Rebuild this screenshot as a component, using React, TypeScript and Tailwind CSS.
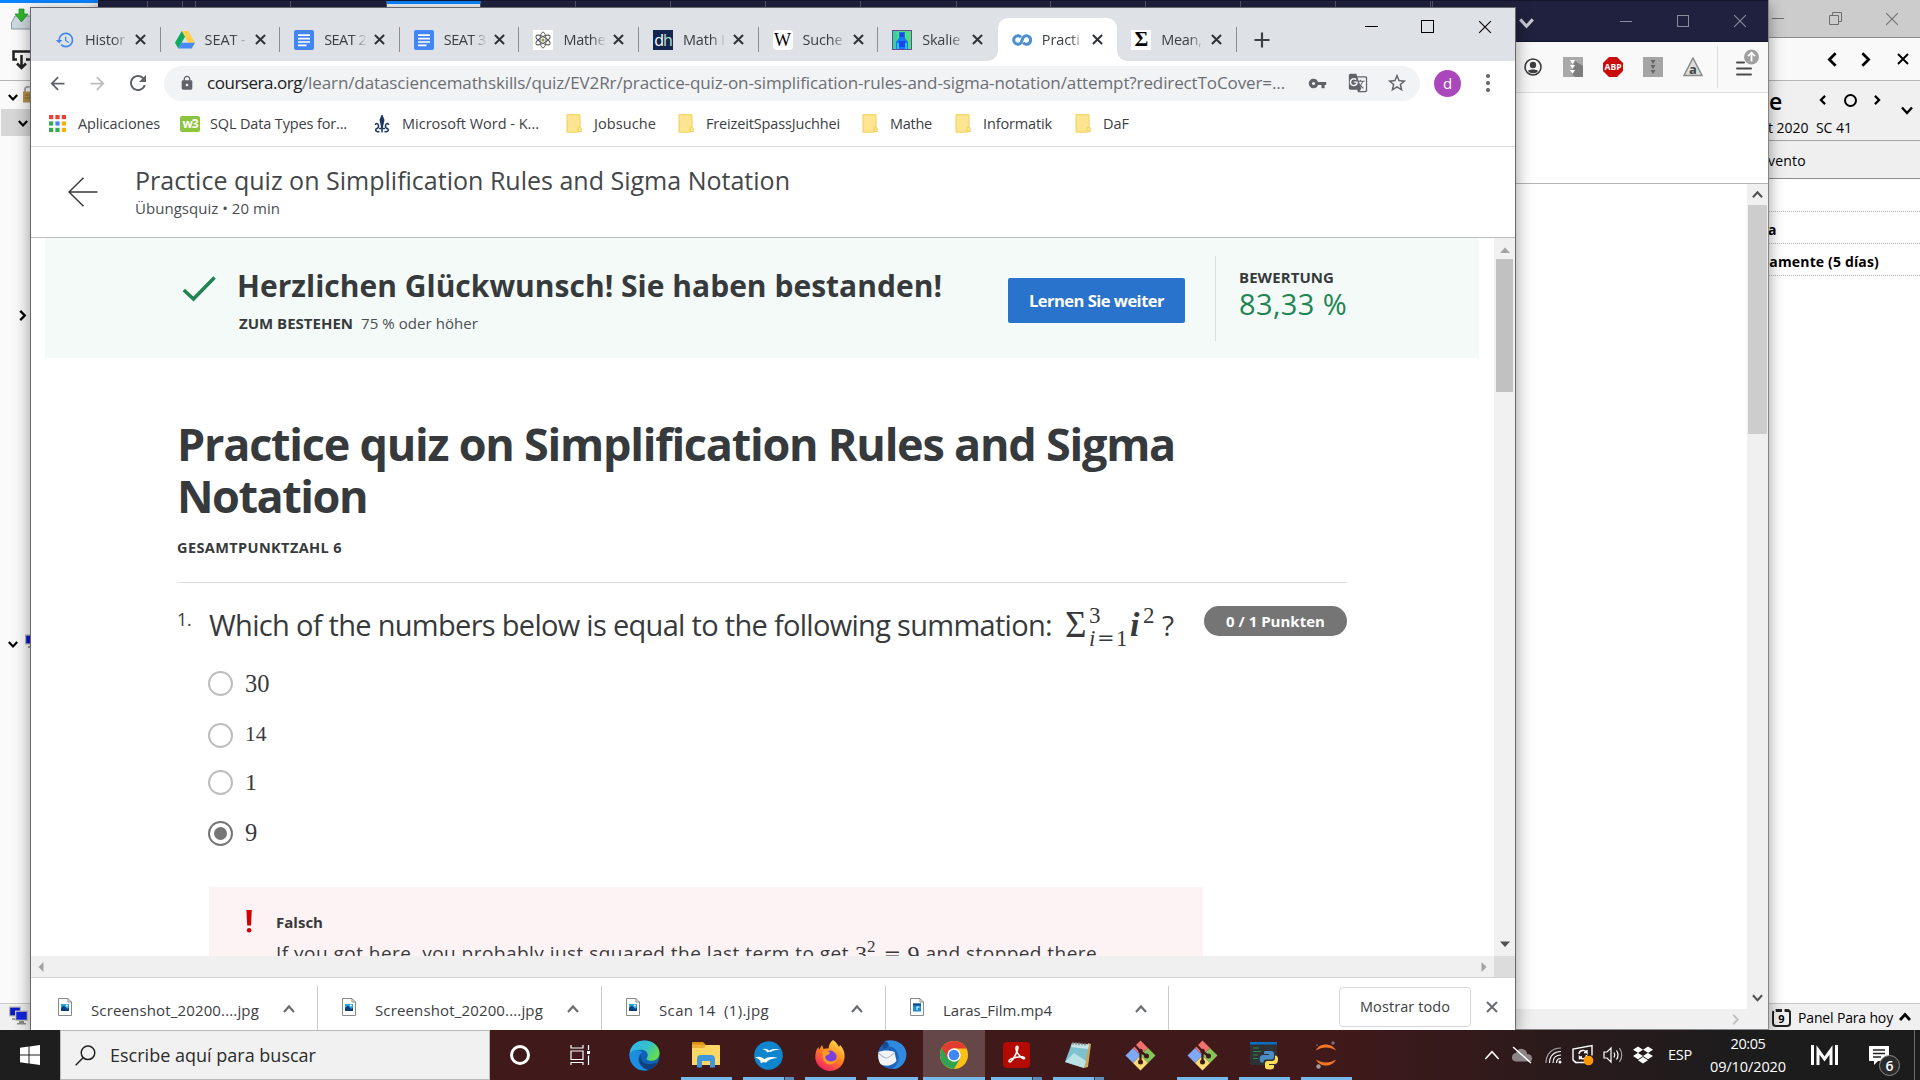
import React, { useLayoutEffect, useRef, useState } from "react";
import { MdHistory, MdLock, MdVpnKey, MdGTranslate, MdStarBorder, MdRefresh, MdArrowBack, MdArrowForward } from "react-icons/md";
import { FaDropbox } from "react-icons/fa";

/* Spreads a single line of text evenly over a given width. */
function Fit({ w, className = "", children }: { w: number; className?: string; children: string }) {
  const ref = useRef<HTMLSpanElement>(null);
  const [spacing, setSpacing] = useState(0);
  useLayoutEffect(() => {
    const el = ref.current;
    if (!el) return;
    el.style.letterSpacing = "0px";
    const natural = el.getBoundingClientRect().width;
    const next = (w - natural) / children.length;
    el.style.letterSpacing = next + "px";
    setSpacing(next);
  }, [w, children]);
  return (
    <span ref={ref} className={"inline-block shrink-0 whitespace-pre " + className} style={{ letterSpacing: spacing }}>
      {children}
    </span>
  );
}

function Chevron({ dir, size = 12, stroke = 2, className = "" }: { dir: "up" | "down" | "left" | "right"; size?: number; stroke?: number; className?: string }) {
  const d = { up: "M1 9 6 3.5 11 9", down: "M1 3.5 6 9 11 3.5", left: "M8.5 1 3.5 6 8.5 11", right: "M3.5 1 8.5 6 3.5 11" }[dir];
  return (
    <svg width={size} height={size} viewBox="0 0 12 12" className={"shrink-0 " + className} fill="none" stroke="currentColor" strokeWidth={stroke}>
      <path d={d} />
    </svg>
  );
}

function Cross({ size = 11, stroke = 2, className = "" }: { size?: number; stroke?: number; className?: string }) {
  return (
    <svg width={size} height={size} viewBox="0 0 12 12" className={"shrink-0 " + className} fill="none" stroke="currentColor" strokeWidth={stroke}>
      <path d="M1 1 11 11M11 1 1 11" />
    </svg>
  );
}

/* ---------- Favicons ---------- */

const DriveIcon = () => (
  <svg width="20" height="18" viewBox="0 0 20 18">
    <path d="M6.7 0h6.6L20 11.7h-6.6z" fill="#ffcf48" />
    <path d="M6.7 0 0 11.7 3.3 17.5 10 5.8z" fill="#11a861" />
    <path d="M6.6 11.7H20l-3.3 5.8H3.3z" fill="#4688f4" />
  </svg>
);
const DocsIcon = () => (
  <svg width="20" height="20" viewBox="0 0 20 20">
    <rect width="20" height="20" rx="2" fill="#4285f4" />
    <path d="M4 5.2h12M4 8.6h12M4 12h12M4 15.3h8.5" stroke="#fff" strokeWidth="1.7" />
  </svg>
);
const AtomIcon = () => (
  <svg width="20" height="20" viewBox="0 0 20 20" fill="none" stroke="#555" strokeWidth="0.9">
    <rect width="20" height="20" fill="#fff" stroke="none" />
    <ellipse cx="10" cy="10" rx="3" ry="8" />
    <ellipse cx="10" cy="10" rx="3" ry="8" transform="rotate(60 10 10)" />
    <ellipse cx="10" cy="10" rx="3" ry="8" transform="rotate(120 10 10)" />
    <circle cx="10" cy="10" r="1.6" fill="#8a9a3b" stroke="none" />
  </svg>
);
const DhIcon = () => (
  <span className="flex h-5 w-5 items-center justify-center bg-[#14264f] font-['Open_Sans',sans-serif] text-[16px] leading-none tracking-[-1px]">
    <span className="text-white">d</span>
    <span className="text-[#b9e6d2]">h</span>
  </span>
);
const WikiIcon = () => (
  <span className="flex h-5 w-5 items-center justify-center rounded-[4px] bg-white font-['Liberation_Serif',serif] text-[18px] leading-none text-black">W</span>
);
const HeatIcon = () => (
  <svg width="20" height="20" viewBox="0 0 20 20">
    <rect width="20" height="20" fill="#4fe07a" />
    <path d="M0 0h5v20H0z" fill="#3ccf9a" />
    <path d="M7 2h6v6l3 4v8H4v-8l3-4z" fill="#1676f5" />
    <path d="M8 3h4v4H8zM7 11h6v6H7z" fill="#1b45e6" />
    <path d="M5 13h2v7H5zM13 13h2v7h-2z" fill="#20c9ef" />
    <rect x=".5" y=".5" width="19" height="19" fill="none" stroke="#6a4aa0" />
  </svg>
);
const CourseraIcon = () => (
  <svg width="20" height="12" viewBox="0 0 20 12" fill="none" stroke="#4a8fcf" strokeWidth="3">
    <path d="M9 3.2A4.2 4.2 0 1 0 9 8.8L11.2 3.4A4.2 4.2 0 1 1 11.2 8.6" strokeLinejoin="round" />
  </svg>
);
const SigmaIcon = () => (
  <span className="flex h-5 w-5 items-center justify-center bg-white font-['Liberation_Serif',serif] text-[21px] font-bold leading-none text-black">Σ</span>
);

const TABS: { icon: React.ReactNode; title: string; w: number; active?: boolean; bar?: boolean }[] = [
  { icon: <MdHistory size={20} color="#4285f4" />, title: "Histor", w: 40, bar: true },
  { icon: <DriveIcon />, title: "SEAT -", w: 41, bar: true },
  { icon: <DocsIcon />, title: "SEAT 2", w: 42, bar: true },
  { icon: <DocsIcon />, title: "SEAT 3", w: 42, bar: true },
  { icon: <AtomIcon />, title: "Mathe", w: 42, bar: true },
  { icon: <DhIcon />, title: "Math I", w: 42, bar: true },
  { icon: <WikiIcon />, title: "Suche", w: 40, bar: true },
  { icon: <HeatIcon />, title: "Skalie", w: 38 },
  { icon: <CourseraIcon />, title: "Practi", w: 38, active: true },
  { icon: <SigmaIcon />, title: "Mean,", w: 40, bar: true },
];

function TabStrip() {
  return (
    <div className="flex h-[53px] bg-[#dee1e6] pl-[10px]">
      {TABS.map((t, i) => (
        <div key={i} className={"relative mt-[10px] flex h-[43px] w-[119.6px] shrink-0 items-center " + (t.active ? "rounded-t-[10px] bg-white" : "")}>
          {t.active && (
            <>
              <span className="absolute bottom-0 -left-[10px] h-[10px] w-[10px] bg-[radial-gradient(circle_at_0_0,transparent_9.5px,white_10px)]" />
              <span className="absolute bottom-0 -right-[10px] h-[10px] w-[10px] bg-[radial-gradient(circle_at_100%_0,transparent_9.5px,white_10px)]" />
            </>
          )}
          <span className="ml-[14px] flex w-5 items-center justify-center">{t.icon}</span>
          <span className="ml-[10px] w-[43px] overflow-hidden text-[14.5px] leading-5 text-[#3c4043] [mask-image:linear-gradient(to_right,black_65%,rgba(0,0,0,0.15)_95%)]">
            <Fit w={t.w}>{t.title}</Fit>
          </span>
          <Cross size={11} stroke={2.2} className="ml-[7px] text-[#303337]" />
          {t.bar && <span className="ml-auto h-[25px] w-px bg-[#8a8d91]" />}
        </div>
      ))}
      <span className="mt-[10px] ml-[17.5px] flex h-[43px] items-center text-[#3c4043]">
        <svg width="16" height="16" viewBox="0 0 16 16" stroke="currentColor" strokeWidth="2.2">
          <path d="M8 0.5v15M0.5 8h15" />
        </svg>
      </span>
      <div className="ml-[95px] flex h-[37px] items-center text-black">
        <span className="h-px w-[13px] bg-black" />
        <span className="ml-[43px] h-[13px] w-[13px] border border-black" />
        <Cross size={14} stroke={0.95} className="ml-[44px]" />
      </div>
    </div>
  );
}

function Toolbar() {
  return (
    <div className="flex h-[44px] items-center bg-white text-[#5f6368]">
      <MdArrowBack size={21} className="ml-[16px]" />
      <MdArrowForward size={21} className="ml-[19px] text-[#babcbe]" />
      <MdRefresh size={24} className="ml-[18px]" />
      <div className="ml-[14px] flex h-[35px] w-[1256px] items-center rounded-full bg-[#f1f3f4]">
        <MdLock size={16} className="ml-[15px]" />
        <span className="ml-[12px] flex text-[17px] leading-6">
          <Fit w={95} className="text-[#202124]">coursera.org</Fit>
          <Fit w={983} className="text-[#6b6f74]">/learn/datasciencemathskills/quiz/EV2Rr/practice-quiz-on-simplification-rules-and-sigma-notation/attempt?redirectToCover=...</Fit>
        </span>
        <MdVpnKey size={19} className="ml-[23px]" />
        <MdGTranslate size={20} className="ml-[21px]" />
        <MdStarBorder size={22} className="ml-[18px]" />
      </div>
      <span className="ml-[14px] flex h-[27px] w-[27px] items-center justify-center rounded-full bg-[#ab47bc] text-[15px] leading-none text-white">d</span>
      <span className="ml-[25px] flex flex-col gap-[3px]">
        <span className="h-1 w-1 rounded-full bg-[#5f6368]" />
        <span className="h-1 w-1 rounded-full bg-[#5f6368]" />
        <span className="h-1 w-1 rounded-full bg-[#5f6368]" />
      </span>
    </div>
  );
}

const Folder = () => (
  <svg width="16" height="19" viewBox="0 0 16 19">
    <path d="M1 .7h13v12.5l1.2.8v3.5H12V18.2H1z" fill="#ffe591" stroke="#f3cf55" strokeWidth="1" />
    <path d="M12 17.5v-4.3h2" fill="none" stroke="#f3cf55" />
  </svg>
);

const APP_DOTS = ["#ea4335", "#ea4335", "#ea4335", "#34a853", "#4285f4", "#fbaf05", "#34a853", "#34a853", "#fbaf05"];

const FOLDERS: [string, string, number][] = [
  ["ml-[27px]", "Jobsuche", 62],
  ["ml-[22px]", "FreizeitSpassJuchhei", 134],
  ["ml-[22px]", "Mathe", 42],
  ["ml-[23px]", "Informatik", 69],
  ["ml-[23px]", "DaF", 26],
];

function Bookmarks() {
  return (
    <div className="flex h-[42px] items-center border-b border-[#d8dadd] bg-white pb-[4px] text-[14.5px] leading-5 text-[#3c4043]">
      <svg width="17" height="17" viewBox="0 0 17 17" className="ml-[18px]">
        {APP_DOTS.map((c, i) => (
          <rect key={i} x={(i % 3) * 6.4} y={Math.floor(i / 3) * 6.4} width="4.2" height="4.2" fill={c} />
        ))}
      </svg>
      <Fit w={82} className="ml-[12px]">Aplicaciones</Fit>
      <span className="ml-[20px] flex h-4 w-5 items-center justify-center rounded-[2px] bg-[#8cc43d] text-[12px] font-bold leading-none tracking-[-1px] text-white">w3</span>
      <Fit w={137} className="ml-[10px]">SQL Data Types for...</Fit>
      <svg width="16" height="18" viewBox="0 0 16 18" className="ml-[27px]" fill="none" stroke="#1f3864" strokeWidth="1.5">
        <path d="M8 .5 6.300 5 8 13l1.700-8z" fill="#1f3864" />
        <path d="M8 12v5.500M5.500 16.500c-3 .8-4.500-1-3.500-2.500 1.500-.5 3-1 2.500-3.500C4 8 1.500 8 1.500 10M10.500 16.500c3 .8 4.500-1 3.500-2.500-1.500-.5-3-1-2.500-3.500.5-2.500 3-2.500 3-.5M5 13.500h6" />
      </svg>
      <Fit w={137} className="ml-[12px]">Microsoft Word - K...</Fit>
      {FOLDERS.map(([m, name, w]) => (
        <span key={name} className={"flex items-center " + m}>
          <Folder />
          <Fit w={w} className="ml-[12px]">{name}</Fit>
        </span>
      ))}
    </div>
  );
}

function PageHeader() {
  return (
    <div className="flex h-[91px] border-b border-[#b9bbbc] bg-white text-[#373a3c]">
      <svg width="30" height="30" viewBox="0 0 30 30" className="mt-[30px] ml-[37px]" fill="none" stroke="#373a3c" strokeWidth="1.5">
        <path d="M29.500 15H1M15.500 .8 1 15 15.500 29.200" />
      </svg>
      <div className="mt-[15px] ml-[37px]">
        <div className="h-[36px] text-[25px] leading-[36px]">
          <Fit w={655} className="text-[#43474a]">Practice quiz on Simplification Rules and Sigma Notation</Fit>
        </div>
        <div className="h-[20px] text-[15px] leading-[20px]">
          <Fit w={145} className="text-[#4b4e51]">Übungsquiz • 20 min</Fit>
        </div>
      </div>
    </div>
  );
}

function Banner() {
  return (
    <div className="ml-[14px] flex h-[120px] w-[1434px] bg-[#f4faf8] text-[#373a3c]">
      <svg width="34" height="26" viewBox="0 0 34 26" className="mt-[38px] ml-[137px]" fill="none" stroke="#208552" strokeWidth="3.6">
        <path d="M1.800 14 11.500 23 32.500 1.500" />
      </svg>
      <div className="ml-[21px] w-[771px]">
        <div className="mt-[27px] h-[42px] text-[30px] font-bold leading-[42px]">
          <Fit w={705}>Herzlichen Glückwunsch! Sie haben bestanden!</Fit>
        </div>
        <div className="mt-[6px] ml-[2px] flex h-5 text-[15px] leading-5">
          <Fit w={114} className="font-bold">ZUM BESTEHEN</Fit>
          <Fit w={117} className="ml-[8px] text-[#4b4e51]">75 % oder höher</Fit>
        </div>
      </div>
      <div className="mt-[40px] flex h-[45px] w-[177px] items-center justify-center rounded-[2px] bg-[#2a73cc] pt-[1px] text-[16.500px] font-bold text-white">
        <Fit w={135}>Lernen Sie weiter</Fit>
      </div>
      <div className="mt-[18px] ml-[30px] h-[85px] w-px bg-[#d9dfde]" />
      <div className="ml-[23px] pt-[29px]">
        <div className="h-[20px] text-[15px] font-bold leading-[21px]">
          <Fit w={95}>BEWERTUNG</Fit>
        </div>
        <div className="h-[34px] text-[29px] leading-[34px] text-[#208552]">
          <Fit w={108}>83,33 %</Fit>
        </div>
      </div>
    </div>
  );
}

function SumFormula() {
  return (
    <span className="flex h-[46px] items-center font-['Liberation_Serif',serif] text-[#373a3c]">
      <span className="w-[24px] text-[37px] leading-[46px]">Σ</span>
      <span className="flex w-[41px] flex-col pt-[3px] text-[23px] leading-[23px]">
        <span>3</span>
        <span className="flex">
          <i className="w-[8px]">i</i>
          <span className="w-[19px] font-['DejaVu_Serif',serif] text-[21px]">=</span>
          <span>1</span>
        </span>
      </span>
      <b className="w-[13px] text-[34px] font-bold italic leading-[46px]">i</b>
      <span className="h-[38px] w-[19px] pt-[1px] text-[23px] leading-[18px]">2</span>
      <span className="font-['Open_Sans',sans-serif] text-[28px] leading-[46px]">?</span>
    </span>
  );
}

const ANSWERS: { label: string; row: string; text: string; on?: boolean }[] = [
  { label: "30", row: "h-[70px]", text: "text-[24.500px] pt-[2px]" },
  { label: "14", row: "h-[34px]", text: "text-[21.500px] pb-[2px]" },
  { label: "1", row: "h-[60px]", text: "text-[24px]" },
  { label: "9", row: "h-[42px]", text: "text-[24.500px]", on: true },
];

function Quiz() {
  return (
    <div className="ml-[146px] w-[1170px] text-[#373a3c]">
      <h1 className="mt-[60px] flex flex-col items-start text-[45px] font-bold leading-[52px]">
        <Fit w={998}>Practice quiz on Simplification Rules and Sigma</Fit>
        <Fit w={190}>Notation</Fit>
      </h1>
      <div className="mt-[16px] h-5 text-[14.500px] font-bold leading-5">
        <Fit w={165}>GESAMTPUNKTZAHL 6</Fit>
      </div>
      <div className="mt-[24px] h-px bg-[#dcddde]" />
      <div className="mt-[19px] flex h-[46px]">
        <span className="w-[32px] pt-[5px] text-[17.500px] leading-[24px]">1.</span>
        <span className="w-[856px] text-[29px] leading-[45px]">
          <Fit w={843}>Which of the numbers below is equal to the following summation:</Fit>
        </span>
        <SumFormula />
        <span className="mt-[4px] ml-auto flex h-[30px] w-[143px] items-center justify-center rounded-full bg-[#757575] text-[15px] font-bold text-white">
          <Fit w={99}>0 / 1 Punkten</Fit>
        </span>
      </div>
      <div className="ml-[31px]">
        {ANSWERS.map((a) => (
          <div key={a.label} className={"flex items-center " + a.row}>
            <span className={"flex h-[25px] w-[25px] items-center justify-center rounded-full border-[2.5px] " + (a.on ? "border-[#757575]" : "border-[#bdbdbd]")}>
              {a.on && <span className="h-[13px] w-[13px] rounded-full bg-[#757575]" />}
            </span>
            <span className={"ml-[12px] font-['Liberation_Serif',serif] leading-[26px] " + a.text}>{a.label}</span>
          </div>
        ))}
      </div>
      <div className="mt-[33px] ml-[32px] flex h-[69px] w-[994px] overflow-hidden bg-[#fdf3f4]">
        <svg width="8" height="24" viewBox="0 0 8 24" className="mt-[22px] ml-[36px]" fill="#d30001">
          <path d="M1.400 1h5.400L6 16.500H2.200z" />
          <circle cx="4.100" cy="21.300" r="2.300" />
        </svg>
        <div className="ml-[23px] pt-[23px]">
          <div className="h-[24px] text-[15px] font-bold leading-[24px]">
            <Fit w={47}>Falsch</Fit>
          </div>
          <div className="mt-[5px] flex h-[30px] text-[19px] leading-[29px]">
            <Fit w={573}>If you got here, you probably just squared the last term to get</Fit>
            <span className="ml-[6px] flex font-['Liberation_Serif',serif] text-[24px] leading-[30px]">
              <span>3</span>
              <span className="-mt-[7px] text-[17px]">2</span>
              <span className="ml-[8px] w-[24px] font-['DejaVu_Serif',serif] text-[21px]">=</span>
              <span>9</span>
            </span>
            <Fit w={177} className="ml-[6px]">and stopped there.</Fit>
          </div>
        </div>
      </div>
    </div>
  );
}

const Tri = ({ d, c = "#a3a3a3" }: { d: string; c?: string }) => (
  <svg width="10" height="10" viewBox="0 0 10 10" fill={c}>
    <path d={d} />
  </svg>
);

const ImgFile = ({ video = false }: { video?: boolean }) => (
  <svg width="14" height="18" viewBox="0 0 14 18">
    <path d="M.5 .5h9.500l3.500 3.500v13.500H.5z" fill="#fff" stroke="#8a8a8a" />
    <path d="M10 .5V4h3.500" fill="none" stroke="#8a8a8a" />
    {video ? (
      <>
        <path d="M3 5.500h8v8H3z" fill="#1c8ad6" />
        <path d="M3 5.500h8v2H3z" fill="#0a4a8a" />
        <path d="M6.500 8.500h3v1h-2v2.500h-1z" fill="#fff" />
      </>
    ) : (
      <>
        <path d="M3 6h8v7H3z" fill="#2aa5e8" />
        <path d="M3 13v-3l3-2.500L9 11l2-1.500V13z" fill="#0b3f7c" />
        <circle cx="8.800" cy="7.500" r="1" fill="#fff" />
      </>
    )}
  </svg>
);

const DOWNLOADS: { name: string; w: number; cell: string; video?: boolean }[] = [
  { name: "Screenshot_20200....jpg", w: 168, cell: "w-[287px] pl-[27px]" },
  { name: "Screenshot_20200....jpg", w: 168, cell: "w-[284px] pl-[24px]" },
  { name: "Scan 14  (1).jpg", w: 110, cell: "w-[284px] pl-[24px]" },
  { name: "Laras_Film.mp4", w: 109, cell: "w-[283px] pl-[24px]", video: true },
];

function DownloadShelf() {
  return (
    <div className="flex h-[53px] border-t border-[#d2d4d6] bg-white text-[#3c4043]">
      {DOWNLOADS.map((d, i) => (
        <div key={i} className={"mt-[8px] flex h-[45px] items-center border-r border-[#c9cbcd] " + d.cell}>
          <span className="-mt-[4px]">
            <ImgFile video={d.video} />
          </span>
          <span className="ml-[19px] w-[190px] pt-[2px] text-[15px] leading-5">
            <Fit w={d.w}>{d.name}</Fit>
          </span>
          <Chevron dir="up" stroke={2.2} className="ml-[2px] text-[#6b6e72]" />
        </div>
      ))}
      <span className="mt-[9px] ml-[170px] flex h-[40px] w-[132px] shrink-0 items-center justify-center rounded-[4px] border border-[#d5d7da] text-[14.500px]">
        <Fit w={90}>Mostrar todo</Fit>
      </span>
      <Cross size={12} stroke={2.1} className="mt-[23px] ml-[15px] text-[#6b6e72]" />
    </div>
  );
}

function ChromeWindow() {
  return (
    <div className="absolute top-[7px] left-[30px] flex h-[1023px] w-[1486px] flex-col overflow-hidden border border-b-0 border-[#66686b] bg-white shadow-[0_4px_16px_rgba(0,0,0,0.4)]">
      <TabStrip />
      <Toolbar />
      <Bookmarks />
      <PageHeader />
      <div className="flex h-[718px]">
        <div className="w-[1463px] overflow-hidden">
          <Banner />
          <Quiz />
        </div>
        <div className="flex w-[21px] flex-col items-center bg-[#f1f1f1]">
          <span className="flex h-[21px] items-center pt-[3px]"><Tri d="M0 8 5 2.500 10 8z" /></span>
          <span className="h-[133px] w-[17px] bg-[#c1c1c1]" />
          <span className="mt-auto flex h-[24px] items-center"><Tri d="M0 2.500 5 8 10 2.500z" c="#505050" /></span>
        </div>
      </div>
      <div className="flex h-[21px] bg-[#f0f0f0]">
        <span className="flex flex-1 items-center justify-between px-[5px]">
          <Tri d="M7.500 0 2.500 5 7.500 10z" />
          <Tri d="M2.500 0 7.500 5 2.500 10z" />
        </span>
        <span className="w-[21px] bg-[#dcdcdc]" />
      </div>
      <DownloadShelf />
    </div>
  );
}

/* ---------- Firefox window behind the browser ---------- */

const FF_TABS = [50, 35, 13, 95, 96, 94, 95, 95, 95, 95, 96, 94, 95, 95, 95, 95, 2];

function FirefoxWindow() {
  return (
    <div className="absolute top-0 left-[98px] flex h-[1030px] w-[1671px] flex-col border-r border-[#85868c] bg-white shadow-[0_4px_14px_rgba(0,0,0,0.4)]">
      <div className="relative flex h-[42px] justify-end border-t border-b border-[#14152b] bg-[#20213f]">
        <div className="absolute top-0 left-0 flex h-[7px]">
          {FF_TABS.map((w, i) => (
            <span key={i} className={"border-r border-[#55566f] " + (i === 5 ? "border-t-[3px] border-t-[#0a84ff] bg-[#f5f6f7]" : "")} style={{ width: w }} />
          ))}
        </div>
        <div className="flex h-[40px] items-center text-[#8b8b9c]">
          <Chevron dir="down" size={15} stroke={2.500} className="mt-[2px] text-[#c9c9d3]" />
          <span className="ml-[86px] h-px w-[12px] bg-[#8b8b9c]" />
          <span className="ml-[45px] h-[12px] w-[12px] border border-[#8b8b9c]" />
          <Cross size={14} stroke={0.95} className="mr-[21px] ml-[44px]" />
        </div>
      </div>
      <div className="flex h-[51px] items-center justify-end border-b border-[#dedede] bg-[#f9f9fa]">
        <svg width="18" height="18" viewBox="0 0 18 18" fill="none" stroke="#3d3d40" strokeWidth="1.600">
          <circle cx="9" cy="9" r="8" />
          <circle cx="9" cy="7" r="3.200" fill="#3d3d40" stroke="none" />
          <path d="M4 13c1-2 9-2 10 0-2 3-8 3-10 0z" fill="#3d3d40" stroke="none" />
        </svg>
        <svg width="20" height="20" viewBox="0 0 20 20" className="ml-[21px]">
          <path d="M0 0h20v20H0z" fill="#a9a9a9" />
          <path d="M12 4l8 5v11h-8l-4-4z" fill="#7d7d7d" />
          <path d="M7 3h5l-2.500 4zM7 8h5l-2.500 4zM7 13h5l-2.500 4z" fill="#fff" />
        </svg>
        <svg width="20" height="20" viewBox="0 0 20 20" className="ml-[20px]">
          <path d="M6 0h8l6 6v8l-6 6H6l-6-6V6z" fill="#c90c0c" />
          <text x="10" y="13.300" textAnchor="middle" fontSize="9" fontWeight="700" fontFamily="Open Sans" fill="#fff" textLength="17" lengthAdjust="spacingAndGlyphs">ABP</text>
        </svg>
        <svg width="20" height="20" viewBox="0 0 20 20" className="ml-[20px]">
          <path d="M0 0h20v20H0z" fill="#a5a5a5" />
          <path d="M7.500 3h5L10 7zM7.500 8h5L10 12zM7.500 13h5L10 17z" fill="#666" />
        </svg>
        <svg width="20" height="20" viewBox="0 0 20 20" className="ml-[20px]">
          <path d="M10 1 19 18.500H1z" fill="#ddd" stroke="#8a8a8a" strokeWidth="1.500" />
          <text x="10" y="16.500" textAnchor="middle" fontSize="13" fontWeight="700" fontFamily="Open Sans" fill="#444">a</text>
        </svg>
        <span className="ml-[14px] h-[42px] w-px bg-[#dcdcdc]" />
        <svg width="24" height="28" viewBox="0 0 24 28" className="mt-[-9px] mr-[8px] ml-[18px]">
          <path d="M1 13.500h7M1 19.500h14M1 25.500h14" stroke="#4a4a4f" strokeWidth="2" strokeLinecap="round" />
          <circle cx="15.500" cy="8" r="7.500" fill="#a0a0a0" />
          <path d="M15.500 12.500V4M12 7.200 15.500 3.700 19 7.200" stroke="#fff" strokeWidth="1.800" fill="none" />
        </svg>
      </div>
      <div className="h-[91px] border-b border-[#b4b4b5]" />
      <div className="flex flex-1">
        <div className="flex flex-1 flex-col justify-end">
          <div className="flex h-[20px] items-center justify-end bg-[#f0f0f0] pr-[6px] text-[#bfbfbf]">
            <Chevron dir="right" size={11} stroke={2} />
          </div>
        </div>
        <div className="flex w-[21px] flex-col items-center bg-[#f0f0f0]">
          <span className="flex h-[21px] items-center"><Chevron dir="up" size={11} stroke={2.200} className="text-[#505050]" /></span>
          <span className="h-[229px] w-[19px] bg-[#cdcdcd]" />
          <Chevron dir="down" size={11} stroke={2.200} className="mt-auto mb-[26px] text-[#505050]" />
        </div>
      </div>
      <div className="h-px bg-[#85868c]" />
    </div>
  );
}

/* ---------- Mail window at the very back ---------- */

const Screens = ({ className = "" }: { className?: string }) => (
  <svg width="20" height="19" viewBox="0 0 20 19" className={"shrink-0 " + className}>
    <path d="M0 .5h12v10H0z" fill="#b8b8b0" />
    <path d="M1.200 1.700h9.600v7.600H1.200z" fill="#0a18c8" />
    <path d="M3 12h5v2H3z" fill="#999" />
    <path d="M6 4.500h13v10.500H6z" fill="#c6c6be" />
    <path d="M7.300 5.800h10.400v7.900H7.300z" fill="#1224e0" />
    <path d="M10 15h5v2h2v1.500H8V17h2z" fill="#8c8c88" />
  </svg>
);

function MailWindow() {
  return (
    <div className="absolute inset-x-0 top-0 flex h-[1030px] justify-between bg-[#fafafa] text-black">
      <div className="flex w-[98px] flex-col border-t-[3px] border-[#0a84ff]">
        <svg width="24" height="22" viewBox="0 0 24 22" className="mt-[5px] ml-[11px]">
          <path d="M4 8h16l3.500 7v6H.5v-6z" fill="#cfdbe2" stroke="#8698a3" />
          <path d="M8 1h5v5h4l-6.500 8L4 6h4z" fill="#2fb52c" stroke="#1f8a1f" strokeWidth=".7" />
        </svg>
        <svg width="24" height="20" viewBox="0 0 24 20" className="mt-[20px] ml-[12px]" fill="none" stroke="#222" strokeWidth="2.500">
          <path d="M5 9.500H1.500v-8h18v8H14M9.500 5v13M5 13.500l4.500 4.500 4.500-4.500" />
        </svg>
        <div className="mt-[10px] h-px bg-[#b5b5b5]" />
        <div className="flex h-[28px] items-center pt-[3px]">
          <Chevron dir="down" size={10} stroke={2.600} className="ml-[8px]" />
          <svg width="14" height="17" viewBox="0 0 14 17" className="mb-[4px] ml-[5px]">
            <path d="M2 6V3q0-2.500 5-2.500T12 3v3" fill="none" stroke="#a5a5a5" strokeWidth="2" />
            <rect y="5.500" width="14" height="11" fill="#b4904c" />
            <path d="M2 9h10M2 12h10" stroke="#8c6b2d" />
          </svg>
        </div>
        <div className="ml-[1px] flex h-[27px] items-center bg-[#d6d6d6]">
          <Chevron dir="down" size={10} stroke={2.600} className="ml-[17px]" />
        </div>
        <Chevron dir="right" size={11} stroke={2.600} className="mt-[174px] ml-[17px]" />
        <div className="mt-[313px] flex items-center">
          <Chevron dir="down" size={10} stroke={2.600} className="ml-[8px]" />
          <Screens className="ml-[7px]" />
        </div>
        <div className="mt-auto flex h-[27px] items-center border-t border-[#c8c8c8] bg-[#f0f0f0]">
          <Screens className="mb-[3px] ml-[9px]" />
        </div>
      </div>
      <div className="flex w-[152px] flex-col bg-white">
        <div className="flex h-[38px] items-center border-b border-[#8c8c8c] bg-[#cccccc] text-[#6f6f6f]">
          <span className="ml-[4px] h-px w-[12px] bg-[#6f6f6f]" />
          <svg width="13" height="13" viewBox="0 0 13 13" className="ml-[45px]" fill="none" stroke="#6f6f6f">
            <path d="M.5 3.500h9v9h-9zM3.500 3.500v-3h9v9h-3" />
          </svg>
          <Cross size={14} stroke={0.95} className="ml-[43px]" />
        </div>
        <div className="flex h-[43px] items-center border-b border-[#b5b5b5] bg-[#f9f9f9]">
          <Chevron dir="left" size={15} stroke={2.200} className="ml-[57px]" />
          <Chevron dir="right" size={15} stroke={2.200} className="ml-[18px]" />
          <Cross size={12} stroke={1.900} className="ml-[24px]" />
        </div>
        <div className="h-[60px] border-b border-[#a5a5a5] bg-[#f0f0f0]">
          <div className="flex h-[34px] items-center">
            <span className="mt-[5px] w-[14px] pl-[1px] text-[23px] font-semibold leading-[28px]">e</span>
            <Chevron dir="left" size={10} stroke={2.700} className="mt-[4px] ml-[36px]" />
            <span className="mt-[4px] ml-[16px] h-[13px] w-[13px] rounded-full border-[2.5px] border-black" />
            <Chevron dir="right" size={10} stroke={2.700} className="mt-[4px] ml-[15px]" />
            <Chevron dir="down" size={12} stroke={2.400} className="mt-[24px] ml-[19px]" />
          </div>
          <div className="flex h-[24px] items-center text-[14px]">
            <Fit w={84}>t 2020  SC 41</Fit>
          </div>
        </div>
        <div className="flex h-[38px] items-center border-b border-[#8c8c8c] bg-[#efefef] pt-[2px] text-[14px]">
          <Fit w={38}>vento</Fit>
        </div>
        <div className="h-[33px] border-b border-dotted border-[#b0b0b0]" />
        <div className="flex h-[32px] items-center border-b border-dotted border-[#b0b0b0] pt-[4px] text-[14px] font-bold">
          <Fit w={8}>a</Fit>
        </div>
        <div className="flex h-[32px] items-center justify-end border-b border-dotted border-[#b0b0b0] pt-[3px] pr-[41px] text-[14px] font-bold">
          <Fit w={119}>namente (5 días)</Fit>
        </div>
        <div className="mt-auto flex h-[27px] items-center border-t border-[#c8c8c8] bg-[#f0f0f0] text-[14px]">
          <span className="mt-[1px] ml-[4px] flex h-[18px] w-[19px] items-center justify-center rounded-[4px] border-2 border-t-[3px] border-[#222] text-[11px] font-bold leading-none [border-style:dashed_solid_solid_solid]">9</span>
          <Fit w={95} className="ml-[7px]">Panel Para hoy</Fit>
          <Chevron dir="up" size={12} stroke={2.800} className="ml-[6px]" />
        </div>
      </div>
    </div>
  );
}

/* ---------- Taskbar ---------- */

const EdgeApp = () => (
  <svg width="31" height="31" viewBox="0 0 32 32">
    <defs>
      <linearGradient id="edge1" x1="0" y1="0" x2="1" y2=".5">
        <stop offset="0" stopColor="#2fb4f0" />
        <stop offset=".6" stopColor="#35c1c9" />
        <stop offset="1" stopColor="#63dd4f" />
      </linearGradient>
    </defs>
    <circle cx="16" cy="16" r="15.500" fill="#0e63b8" />
    <path d="M.8 13C2 5 8 .5 16 .5c9 0 15.500 6 15.500 13 0 5-3.500 8-8 8-4 0-6-1.500-5-3 2.500-4-.5-8.500-6-8.500C7 10 2.500 11 .8 16z" fill="url(#edge1)" />
    <path d="M.6 15c2-5 11-6 13-2-4 2-5 7-3 11 2 4 6 6.500 10 7C9 34 0 25 .6 15z" fill="#1b8ee0" />
    <path d="M13 14c-3 5 1 11 8 11 3 0 6-1 8-2-2 4-5 7-8 8-8-1-14-10-8-17z" fill="#123f7c" />
  </svg>
);
const ExplorerApp = () => (
  <svg width="28" height="26" viewBox="0 0 28 26">
    <path d="M0 3V1q0-1 1-1h10l3 3z" fill="#d99211" />
    <path d="M0 3h27q1 0 1 1v19H0z" fill="#ffd765" />
    <path d="M0 2.500h12l2 1.500-2 2H0z" fill="#eeb035" />
    <path d="M5 25.500V17q0-4 4-4h10q4 0 4 4v8.500h-5V19h-8v6.500z" fill="#3f97dc" />
  </svg>
);
const OfficeApp = () => (
  <svg width="29" height="29" viewBox="0 0 30 30">
    <circle cx="15" cy="15" r="14.800" fill="#0f85d0" />
    <path d="M9 8.500c3-1 5 0 6.500 1.500C18 8 21 8 27 8.500c-4 .5-8 1-9.500 3-1-.8-3 0-4 .5 0-2-2-3-4.500-3.500zM1 17c5-1.500 8 0 9.500 2 3.500-2.500 7-3 14-1.500-6 .5-10.500 2-12 5-2-1-4-.5-5.500.5C7 19.500 4 18 1 17z" fill="#fff" />
  </svg>
);
const FirefoxApp = () => (
  <svg width="30" height="31" viewBox="0 0 30 31">
    <defs>
      <linearGradient id="fox" x1=".8" y1="0" x2=".2" y2="1">
        <stop offset="0" stopColor="#ffe14d" />
        <stop offset=".45" stopColor="#ff8a1f" />
        <stop offset="1" stopColor="#f5156c" />
      </linearGradient>
    </defs>
    <path d="M18 0c4 3 5 5 6 7l1-2c4 4 5 9 4.500 13C28.500 26 22 31 15 31S1 25.500.3 18C0 13 1.500 9 3.500 7l.5 3 3-5 1.500 4c2-1 3-.5 5-.5C14 5 15 2 18 0z" fill="url(#fox)" />
    <circle cx="15" cy="17" r="6.500" fill="#7a3fe0" />
    <path d="M8 11c4-1 6 0 7 2-1 2-3 1.500-5 4 1 5 8 6 11.500 2C21 25 12 27 8.500 20 7.500 17 7 14 8 11z" fill="#ff9a22" />
  </svg>
);
const ThunderbirdApp = () => (
  <svg width="30" height="30" viewBox="0 0 30 30">
    <circle cx="15" cy="15" r="14" fill="#1d63b8" />
    <path d="M8 1c10-3 21 3 21.500 13C29.500 23 22 30 15 29c8-5 9-13 3-20-3-3-6-3-9-2z" fill="#2f8ae0" />
    <path d="M1.500 12c5-2 11-2 16 0l2 9c-4 5-12 6-16 3-2-3-3-8-2-12z" fill="#f1f3f6" />
    <path d="M1.500 13c3 3 5 5 8 5s5-3 8-5" fill="none" stroke="#b7bec8" strokeWidth="1.200" />
    <path d="M8 1c-2 2-3 5-2 8l5-2c2-2 0-5-3-6z" fill="#174a94" />
  </svg>
);
const ChromeApp = () => (
  <svg width="28" height="28" viewBox="0 0 28 28">
    <circle cx="14" cy="14" r="14" fill="#fbc116" />
    <path d="M14 14 1.900 7A14 14 0 0 0 14 28l6-10.500z" fill="#31a350" />
    <path d="M14 7.500h12.400A14 14 0 0 0 1.900 7l6 10.500z" fill="#e33b2e" />
    <circle cx="14" cy="14" r="6.700" fill="#fff" />
    <circle cx="14" cy="14" r="5.300" fill="#4285f4" />
  </svg>
);
const AcrobatApp = () => (
  <svg width="27" height="26" viewBox="0 0 27 26">
    <rect width="27" height="26" rx="4" fill="#b30b00" />
    <path d="M6 19c0-3 15-6 15.500-3 0 3-8.500-4-8.500-9.500 0-3 2.500-3 1.800 0C14 11 9 20 7 20c-.7 0-1-.4-1-1z" fill="none" stroke="#fff" strokeWidth="1.600" />
  </svg>
);
const NotepadApp = () => (
  <svg width="28" height="28" viewBox="0 0 28 28">
    <path d="M24 2l3 1-3 23-4 1z" fill="#c9a85a" />
    <path d="M8 2 25 3.500 20 27 1 21z" fill="#7cc3cf" />
    <path d="M8 2 25 3.500 24 8 7 6z" fill="#c9e3e8" />
    <path d="M1 21 10 12l12 8-2 7z" fill="#b9e1e6" />
    <path d="M9 .8v3M12 1v3M15 1.200v3M18 1.500v3M21 1.800v3" stroke="#777" strokeWidth="1.200" />
  </svg>
);
const GitApp = () => (
  <svg width="31" height="31" viewBox="0 0 31 31">
    <path d="M15.500.5 23 8l-7.500 7.500L8 8z" fill="#f0716d" />
    <path d="M23 8l7.500 7.500L23 23l-7.500-7.500z" fill="#86c557" />
    <path d="M8 8l7.500 7.500L8 23 .5 15.500z" fill="#7fa8f7" />
    <path d="M15.500 15.500 23 23l-7.500 7.500L8 23z" fill="#fbdc74" />
    <path d="M10 5.500l5.500 6V22M15.500 11.500l6 4.500" fill="none" stroke="#3a1a1a" strokeWidth="2.200" />
    <circle cx="15.500" cy="11" r="2.300" fill="#3a1a1a" />
    <circle cx="21.500" cy="16" r="2.500" fill="#3a1a1a" />
    <circle cx="15.500" cy="22" r="2.500" fill="#3a1a1a" />
  </svg>
);
const PythonApp = () => (
  <svg width="28" height="29" viewBox="0 0 28 29">
    <path d="M0 1h27v23H0z" fill="#2f3234" />
    <path d="M0 1h27v2.500H0z" fill="#0a6fc0" />
    <path d="M3 7h6M3 10.500h8M3 14h5M3 17.500h5" stroke="#2f8a45" strokeWidth="1.200" />
    <path d="M15 10h6q3 0 3 3v3q0 2.500-3 2.500h-5q-2.500 0-2.500 3H11q-2-2.500-1-6 .7-1.500 3-1.500h6v-1h-5v-1q0-2 1-2z" fill="#4a8cc4" />
    <path d="M25 14.500q3 0 3 4 0 4-3 4.500h-6v1h5v2q0 2.500-4.500 2.500T15 26v-3.500q0-2.500 2.500-2.500h4.500q3 0 3-3z" fill="#ffdf5a" />
  </svg>
);
const JupyterApp = () => (
  <svg width="24" height="28" viewBox="0 0 24 28">
    <path d="M2 9.500C5 1.500 18 1.500 22 9.500 16 5.500 8 5.500 2 9.500zM2 18.500c4 8 16 8 20 0-6 4-14 4-20 0z" fill="#f37726" />
    <circle cx="19" cy="2" r="1.700" fill="#767677" />
    <circle cx="3" cy="4" r="1" fill="#616262" />
    <circle cx="4.500" cy="25.500" r="2.200" fill="#9e9e9e" />
  </svg>
);

const APPS: { icon: React.ReactNode; run?: "one" | "many" | "active" }[] = [
  { icon: <EdgeApp /> },
  { icon: <ExplorerApp />, run: "one" },
  { icon: <OfficeApp />, run: "many" },
  { icon: <FirefoxApp />, run: "one" },
  { icon: <ThunderbirdApp />, run: "one" },
  { icon: <ChromeApp />, run: "active" },
  { icon: <AcrobatApp />, run: "many" },
  { icon: <NotepadApp />, run: "many" },
  { icon: <GitApp /> },
  { icon: <GitApp />, run: "one" },
  { icon: <PythonApp />, run: "one" },
  { icon: <JupyterApp />, run: "one" },
];

function Tray() {
  return (
    <div className="mr-[5px] ml-auto flex h-full items-center border-r border-[#6a6a6a] text-white">
      <Chevron dir="up" size={16} stroke={1.200} />
      <svg width="22" height="18" viewBox="0 0 22 18" className="ml-[11px]">
        <path d="M5 15.500Q.5 15 1 11t4-4q2-5 6.500-4T16 8q4.500 0 5 4t-4 3.500z" fill="#8c8585" />
        <path d="M2 1l18 16" stroke="#fff" strokeWidth="1.400" />
      </svg>
      <svg width="17" height="18" viewBox="0 0 17 18" className="ml-[12px]" fill="none" stroke="#fff" strokeWidth="1.200">
        <path d="M1 17C1 8 7 2 16 2" opacity=".6" />
        <path d="M4.500 17C4.500 10 9 5.500 16 5.500M8 17c0-5 3-8 8-8M11.500 17c0-3 1.500-4.500 4.500-4.500" />
        <circle cx="15" cy="16" r="1.500" fill="#fff" stroke="none" />
      </svg>
      <svg width="22" height="22" viewBox="0 0 22 22" className="ml-[10px]" fill="none" stroke="#fff" strokeWidth="1.400">
        <path d="M13 18.500H3.500L1 16V5l19-3.500v10M1 16l4 3" />
        <path d="M7 10c0-4 6-5 8-1.500V6M15 8.500h-3M14.500 11c0 4-5 5-7 2v2.500M7.500 13H10" />
        <circle cx="16.500" cy="16.500" r="4.800" fill="#ff9800" stroke="none" />
      </svg>
      <svg width="21" height="18" viewBox="0 0 21 18" className="ml-[9px]" fill="none" stroke="#fff" strokeWidth="1.200">
        <path d="M1 6h3l4-4v14l-4-4H1zM11 6.500q1.500 2.500 0 5M13.500 4.500q3 4.500 0 9" />
        <path d="M16.500 2q4.500 7 0 14" opacity=".6" />
      </svg>
      <FaDropbox size={20} className="ml-[9px]" />
      <Fit w={24} className="ml-[15px] text-[14.500px]">ESP</Fit>
      <span className="ml-[17px] flex w-[78px] flex-col items-center text-[14.500px] leading-[23px]">
        <Fit w={35}>20:05</Fit>
        <Fit w={76}>09/10/2020</Fit>
      </span>
      <svg width="27" height="20" viewBox="0 0 27 20" className="ml-[24px]" fill="none" stroke="#fff" strokeWidth="3">
        <path d="M1.500 0v20M25.500 0v20M7 20V5l6.500 9L20 5v15" />
      </svg>
      <span className="relative ml-[31px] h-[18px] w-[20px]">
        <svg width="20" height="20" viewBox="0 0 20 20" fill="none">
          <path d="M0 0h20v15H9l-4 4v-4H0z" fill="#fff" />
          <path d="M4 4h12M4 7.500h12M4 11h8" stroke="#222" strokeWidth="1.300" />
        </svg>
        <span className="absolute top-[9px] left-[10px] flex h-[21px] w-[21px] items-center justify-center rounded-full border border-[#8c8c8c] bg-[#2b2b2b] text-[14px] font-semibold leading-none">6</span>
      </span>
      <span className="w-[25px]" />
    </div>
  );
}

function Taskbar() {
  return (
    <div className="absolute inset-x-0 bottom-0 flex h-[50px] bg-[linear-gradient(to_right,#40191a_0px,#40191a_1340px,#2c1a1b_1540px,#1c1c1d_1740px,#1c1c1d_100%)]">
      <div className="flex w-[60px] items-center justify-center bg-[#1e1e1e]">
        <svg width="20" height="20" viewBox="0 0 20 20" fill="#fff">
          <path d="M0 2.800 8.500 1.600v8H0zM9.500 1.500 20 0v9.600H9.500zM0 10.500h8.500v7.900L0 17.200zM9.500 10.500H20V20L9.500 18.500z" />
        </svg>
      </div>
      <div className="flex w-[430px] items-center border border-[#b9b9b9] bg-[#f1f1f1] text-[#2b2b2b]">
        <svg width="21" height="21" viewBox="0 0 21 21" className="ml-[14px]" fill="none" stroke="#222" strokeWidth="1.500">
          <circle cx="13" cy="7.800" r="6.800" />
          <path d="M8.300 12.500.7 20.200" />
        </svg>
        <Fit w={206} className="ml-[14px] text-[18px]">Escribe aquí para buscar</Fit>
      </div>
      <div className="flex w-[60px] items-center justify-center">
        <span className="h-[20px] w-[20px] rounded-full border-[3px] border-white" />
      </div>
      <div className="flex w-[63px] items-center justify-center pr-[2px]">
        <svg width="21" height="20" viewBox="0 0 21 20" fill="none" stroke="#fff" strokeWidth="1.200">
          <path d="M1 6h12v8.500H1zM1 0v3h12V0M1 20v-2.500h12V20M18.500 0v5M18.500 10.500V20" />
          <path d="M17 6h3v3h-3z" fill="#fff" stroke="none" />
        </svg>
      </div>
      {APPS.map((a, i) => (
        <div key={i} className={"relative flex w-[62px] items-center justify-center " + (a.run === "active" ? "bg-[#664748]" : "")}>
          {a.icon}
          {a.run && (
            <span className={"absolute bottom-0 flex h-[3px] bg-[#76b9ed] " + (a.run === "active" ? "inset-x-0" : "inset-x-[5.5px]")}>
              {a.run === "many" && <span className="ml-auto w-[10px] border-l border-[#3c3a4c] bg-[#5b8db8]" />}
            </span>
          )}
        </div>
      ))}
      <Tray />
    </div>
  );
}

export default function App() {
  return (
    <div className="relative h-[1080px] w-[1920px] overflow-hidden bg-white font-['Open_Sans',sans-serif]">
      <MailWindow />
      <FirefoxWindow />
      <ChromeWindow />
      <Taskbar />
    </div>
  );
}
